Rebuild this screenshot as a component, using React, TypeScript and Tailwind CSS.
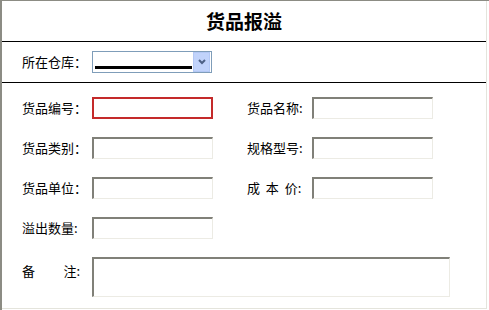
const font = { fontFamily: '"SimSun", "Noto Sans CJK SC", sans-serif' }

const boxCls =
  "h-[22px] w-[121px] border-t-2 border-l-2 border-r border-b border-t-[#808078] border-l-[#808078] border-r-[#ecebe4] border-b-[#ecebe4] bg-white outline-none"

function Field({ label, active }: { label: string; active?: boolean }) {
  return (
    <div className="flex items-center">
      <span className="w-[70px] whitespace-nowrap">{label}</span>
      <input
        className={
          active ? "h-[22px] w-[121px] border-2 border-[#c42a2a] bg-white outline-none" : boxCls
        }
      />
    </div>
  )
}

function RightField({ label }: { label: React.ReactNode }) {
  return (
    <div className="ml-[34px] flex items-center">
      <span className="w-[65px] whitespace-nowrap">{label}</span>
      <input className={boxCls} />
    </div>
  )
}

export default function App() {
  return (
    <div
      className="w-[489px] h-[310px] bg-white border-t border-l-2 border-[#8c8c84] text-[13px] text-black overflow-hidden"
      style={font}
    >
      <div className="w-[485px] h-[308px] border-r border-b border-[#e4e4dc] flex flex-col">
        <div className="h-[41px] shrink-0 flex items-center justify-center border-b border-black">
          <h1 className="text-[19px] font-bold">货品报溢</h1>
        </div>
        <div className="h-[41px] shrink-0 flex items-center pl-[20px] border-b border-black">
          <span className="w-[70px]">所在仓库：</span>
          <div className="h-[22px] w-[120px] border border-[#7f9db9] flex items-center">
            <div className="flex-1 h-full flex items-end pb-[3px] pl-[2px]">
              <div className="h-[3px] w-[97px] bg-black" />
            </div>
            <div className="w-[17px] h-[20px] mr-[1px] bg-[#c1d3fb] border border-[#b3c8f5] flex items-center justify-center">
              <svg width="8" height="6" viewBox="0 0 8 6">
                <path d="M1 1 L4 4 L7 1" stroke="#4d6185" strokeWidth="2" fill="none" />
              </svg>
            </div>
          </div>
        </div>
        <div className="flex flex-col pl-[20px] pt-[14px] gap-[18px]">
          <div className="flex items-center">
            <Field label="货品编号：" active />
            <RightField label="货品名称:" />
          </div>
          <div className="flex items-center">
            <Field label="货品类别：" />
            <RightField label="规格型号:" />
          </div>
          <div className="flex items-center">
            <Field label="货品单位：" />
            <RightField label={<>成&nbsp;&nbsp;本&nbsp;&nbsp;价:</>} />
          </div>
          <div className="flex items-center">
            <Field label="溢出数量:" />
          </div>
          <div className="flex items-start">
            <span className="w-[70px] flex justify-between pr-[12px] pt-[4px]">
              <span>备</span>
              <span>注:</span>
            </span>
            <textarea className="h-[40px] w-[358px] resize-none border-t-2 border-l-2 border-r border-b border-t-[#808078] border-l-[#808078] border-r-[#ecebe4] border-b-[#ecebe4] bg-white outline-none" />
          </div>
        </div>
      </div>
    </div>
  )
}
